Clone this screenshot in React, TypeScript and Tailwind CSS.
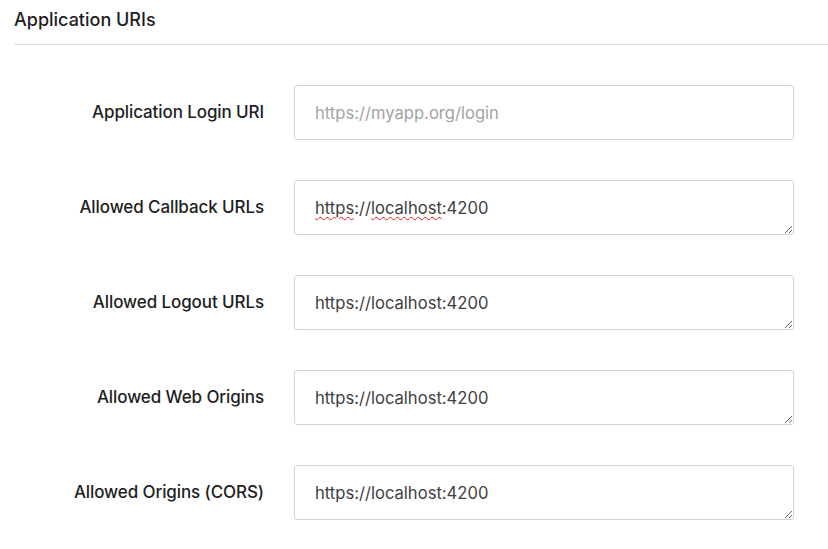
import type { ReactNode } from 'react';

const FONT = { fontFamily: 'Inter, "Noto Sans", sans-serif' };

const rows = [
  { label: 'Allowed Callback URLs', value: 'https://localhost:4200', spell: true },
  { label: 'Allowed Logout URLs', value: 'https://localhost:4200' },
  { label: 'Allowed Web Origins', value: 'https://localhost:4200' },
  { label: 'Allowed Origins (CORS)', value: 'https://localhost:4200' },
];

function Row({ label, children }: { label: string; children: ReactNode }) {
  return (
    <div className="flex items-center">
      <label className="w-[264px] shrink-0 text-right text-[17px] font-medium tracking-[-0.1px] text-[#1e1e1e]">
        {label}
      </label>
      <div className="ml-[30px] w-[500px]">{children}</div>
    </div>
  );
}

export default function App() {
  return (
    <div className="min-h-[549px] w-[828px] bg-white" style={FONT}>
      <div className="pl-[14px] pt-[9px]">
        <h2 className="text-[18px] font-medium leading-[22px] tracking-[0px] text-[#1e1e1e]">Application URIs</h2>
        <div className="mt-[13px] border-b border-[#dedede]" />
      </div>

      <div className="mt-[40px] flex flex-col gap-[40px]">
        <Row label="Application Login URI">
          <input
            type="text"
            placeholder="https://myapp.org/login"
            className="h-[55px] w-full rounded-[3px] border border-[#d3d3d3] px-[20px] text-[16.6px] text-[#404040] outline-none placeholder:text-[#a3a3a3]"
            style={FONT}
          />
        </Row>
        {rows.map((r) =>
          r.spell ? (
            <Row key={r.label} label={r.label}>
              <div className="h-[55px] w-full resize-y overflow-auto rounded-[3px] border border-[#d3d3d3] px-[20px] pt-[16px] text-[16.6px] leading-[22px] text-[#404040]">
                <span className="underline decoration-[#e0201f] decoration-wavy decoration-1 underline-offset-[2px]">https</span>
                ://
                <span className="underline decoration-[#e0201f] decoration-wavy decoration-1 underline-offset-[2px]">localhost</span>
                :4200
              </div>
            </Row>
          ) : (
            <Row key={r.label} label={r.label}>
              <textarea
                defaultValue={r.value}
                spellCheck={false}
                className="block h-[55px] w-full rounded-[3px] border border-[#d3d3d3] px-[20px] pt-[16px] text-[16.6px] leading-[22px] text-[#404040] outline-none"
                style={FONT}
              />
            </Row>
          ),
        )}
      </div>
    </div>
  );
}
